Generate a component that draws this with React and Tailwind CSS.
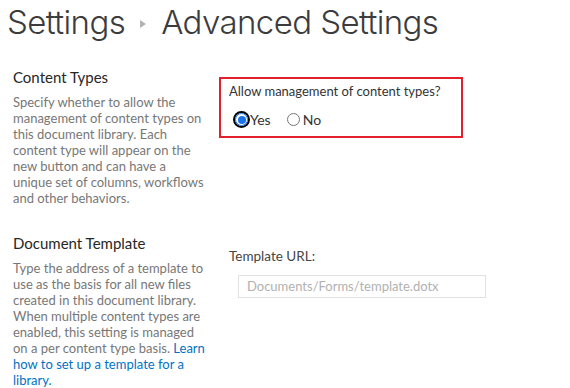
import React from 'react';

function Section({ title, children }) {
  return (
    <div className="flex flex-col">
      <h3 className="text-[15px] leading-[18px] text-[#262626]">{title}</h3>
      <p className="mt-[8px] text-[13px] leading-[16px] text-[#777777]">{children}</p>
    </div>
  );
}

export default function App() {
  return (
    <div className="w-[570px] h-[388px] overflow-hidden bg-white font-['Lato','Open_Sans',sans-serif]">
      <header className="flex items-center pl-[7px] h-[44px] text-[33px] font-['Inter',sans-serif] font-light tracking-[-0.6px] text-[#3c3c3c] leading-none">
        <span>Settings</span>
        <span className="mx-[15px] mt-[4px] w-0 h-0 border-y-[4px] border-y-transparent border-l-[6px] border-l-[#b3b3b3]" />
        <span>Advanced Settings</span>
      </header>

      <div className="flex mt-[24px]">
        <div className="w-[215px] pl-[13px] pr-[8px]">
          <Section title="Content Types">
            Specify whether to allow the management of content types on this document library. Each content type
            will appear on the new button and can have a unique set of columns, workflows and other behaviors.
          </Section>
        </div>
        <div className="pt-[9px]">
          <div className="ml-[4px] w-[244px] border-2 border-[#e3202e] pl-[8px] pt-[2px] pb-[6px]">
            <div className="text-[13px] leading-[20px] text-[#333333]">Allow management of content types?</div>
            <div className="flex items-center mt-[8px] text-[14px] text-[#333333]">
              <label className="flex items-center ml-[4px]">
                <span className="flex items-center justify-center w-[17px] h-[17px] rounded-full border-[2px] border-black">
                  <span className="flex items-center justify-center w-[13px] h-[13px] rounded-full border border-[#1a73e8] bg-white">
                    <span className="w-[8px] h-[8px] rounded-full bg-[#1a73e8]" />
                  </span>
                </span>
                <span>Yes</span>
              </label>
              <label className="flex items-center ml-[16px] gap-[3px]">
                <span className="w-[13px] h-[13px] rounded-full border border-[#767676] bg-white" />
                <span>No</span>
              </label>
            </div>
          </div>
        </div>
      </div>

      <div className="flex mt-[28px]">
        <div className="w-[215px] pl-[13px] pr-[8px]">
          <Section title="Document Template">
            Type the address of a template to use as the basis for all new files created in this document library.
            When multiple content types are enabled, this setting is managed on a per content type basis.{' '}
            <a className="text-[#0072c6]">Learn how to set up a template for a library.</a>
          </Section>
        </div>
        <div className="pl-[14px] pt-[13px]">
          <div className="text-[13.5px] leading-[18px] text-[#444444]">Template URL:</div>
          <div className="mt-[10px] ml-[9px] w-[248px] h-[23px] border border-[#e1e1e1] px-[8px] flex items-center text-[13px] text-[#b1b1b1]">
            Documents/Forms/template.dotx
          </div>
        </div>
      </div>
    </div>
  );
}
